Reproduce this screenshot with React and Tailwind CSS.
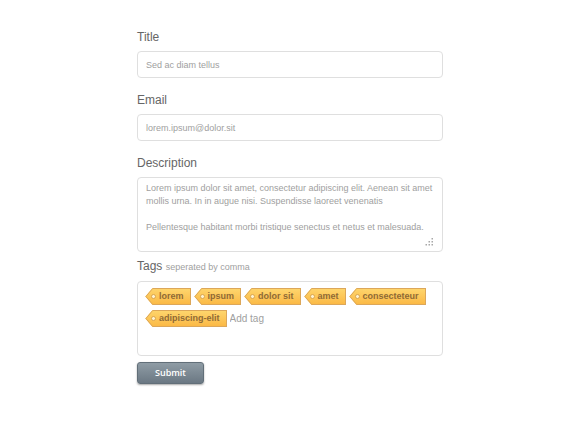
import React, { useState } from "react";

const fieldClass =
  "block w-full rounded-[4px] border border-[#dfdfdf] bg-white px-2 text-[9px] text-[#a0a0a0] outline-none focus:border-[#b5b5b5]";

const labelClass = "block text-[12px] leading-4 text-[#666666]";

// Price-tag shape: pointed head with a hole, then a stretchy body
const Tag = ({ children }) => (
  <li className="flex h-[17px]">
    <svg width="14" height="17" viewBox="0 0 14 17" className="shrink-0">
      <defs>
        <linearGradient id="tagFill" x1="0" y1="0" x2="0" y2="1">
          <stop offset="0" stopColor="#fed56c" />
          <stop offset="1" stopColor="#fbb945" />
        </linearGradient>
      </defs>
      <path d="M14 0H7.5L0.3 8.5L7.5 17H14Z" fill="url(#tagFill)" />
      <path
        d="M14 0.5H7.7L0.9 8.5L7.7 16.5H14"
        fill="none"
        stroke="#dca75a"
      />
      <circle cx="8.5" cy="8.5" r="2" fill="#fff3d0" stroke="#d09a45" strokeWidth="0.8" />
    </svg>
    <span className="border border-l-0 border-[#dca75a] bg-linear-to-b from-[#fed56c] to-[#fbb945] pr-[6px] text-[9px] leading-[15px] font-bold text-[#8f6a35]">
      {children}
    </span>
  </li>
);

const TagInput = () => {
  const [tags, setTags] = useState([
    "lorem",
    "ipsum",
    "dolor sit",
    "amet",
    "consecteteur",
    "adipiscing-elit",
  ]);
  const [draft, setDraft] = useState("");

  const handleKeyDown = (e) => {
    if (e.key !== "," && e.key !== "Enter") return;
    e.preventDefault();
    const value = draft.trim();
    if (value) setTags([...tags, value]);
    setDraft("");
  };

  return (
    <ul className="flex min-h-[75px] flex-wrap content-start gap-x-[3px] gap-y-[5px] rounded-[4px] border border-[#dfdfdf] bg-white py-[6px] pr-1 pl-[7px]">
      {tags.map((tag) => (
        <Tag key={tag}>{tag}</Tag>
      ))}
      <li className="flex h-[17px]">
        <input
          id="tags"
          type="text"
          value={draft}
          onChange={(e) => setDraft(e.target.value)}
          onKeyDown={handleKeyDown}
          placeholder="Add tag"
          className="w-20 text-[10px] leading-4 text-[#a0a0a0] outline-none placeholder:text-[#a0a0a0]"
        />
      </li>
    </ul>
  );
};

const Grip = () => (
  <svg
    width="9"
    height="8"
    viewBox="0 0 9 8"
    fill="#a8a8a8"
    className="pointer-events-none absolute right-[9px] bottom-[6px]"
  >
    <rect x="6.5" y="0" width="1.5" height="1.5" />
    <rect x="3.5" y="3" width="1.5" height="1.5" />
    <rect x="6.5" y="3" width="1.5" height="1.5" />
    <rect x="0.5" y="6" width="1.5" height="1.5" />
    <rect x="3.5" y="6" width="1.5" height="1.5" />
    <rect x="6.5" y="6" width="1.5" height="1.5" />
  </svg>
);

const App = () => {
  return (
    <main className="min-h-screen bg-white px-4 py-[29px] font-['Liberation_Sans',Arial,sans-serif]">
      <form
        className="mx-auto max-w-[306px]"
        onSubmit={(e) => e.preventDefault()}
      >
        <div className="mb-[14px]">
          <label htmlFor="title" className={`${labelClass} mb-[6px]`}>
            Title
          </label>
          <input
            id="title"
            type="text"
            defaultValue="Sed ac diam tellus"
            className={`${fieldClass} h-[27px]`}
          />
        </div>

        <div className="mb-[14px]">
          <label htmlFor="email" className={`${labelClass} mb-[6px]`}>
            Email
          </label>
          <input
            id="email"
            type="email"
            defaultValue="lorem.ipsum@dolor.sit"
            className={`${fieldClass} h-[27px]`}
          />
        </div>

        <div className="mb-[6px]">
          <label htmlFor="description" className={`${labelClass} mb-[6px]`}>
            Description
          </label>
          <div className="relative">
            <textarea
              id="description"
              defaultValue={
                "Lorem ipsum dolor sit amet, consectetur adipiscing elit. Aenean sit amet mollis urna. In in augue nisi. Suspendisse laoreet venenatis\n\nPellentesque habitant morbi tristique senectus et netus et malesuada."
              }
              className={`${fieldClass} h-[75px] resize-none overflow-hidden py-1 leading-[13px]`}
            />
            <Grip />
          </div>
        </div>

        <div className="mb-[6px]">
          <label htmlFor="tags" className={`${labelClass} mb-[6px]`}>
            Tags <span className="text-[9px] text-[#a0a0a0]">seperated by comma</span>
          </label>
          <TagInput />
        </div>

        <button
          type="submit"
          className="block h-[22px] rounded-[3px] border border-[#626f79] bg-linear-to-b from-[#8f9ca5] to-[#6b7883] px-[17px] font-['Open_Sans',sans-serif] text-[9px] font-semibold text-white shadow-[0_1px_2px_rgba(0,0,0,0.35)]"
        >
          Submit
        </button>
      </form>
    </main>
  );
};

export default App;
